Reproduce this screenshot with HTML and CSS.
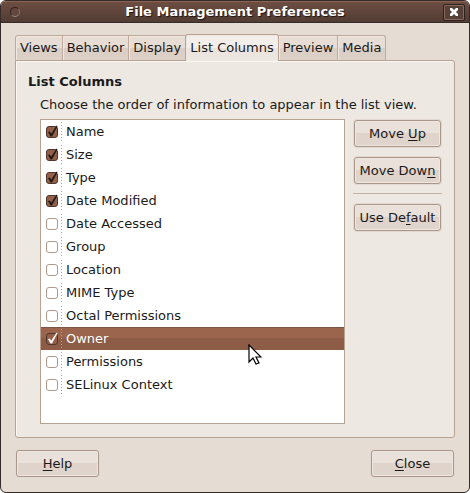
FILE: index.html
```html
<!DOCTYPE html>
<html lang="en">
<head>
<meta charset="utf-8">
<title>File Management Preferences</title>
<link rel="stylesheet" href="styles.css">
</head>
<body>
<main class="window">
  <header class="titlebar">
    <button class="window-menu" aria-label="Window menu"></button>
    <h1 class="title">File Management Preferences</h1>
    <button class="window-close" aria-label="Close window">
      <svg width="10" height="10" viewBox="0 0 10 10"><path d="M1 1h2l2 2 2-2h2v2L7 5l2 2v2H7L5 7 3 9H1V7l2-2-2-2z" fill="#fff"/></svg>
    </button>
  </header>
  <div class="content">
    <nav class="tabs" role="tablist">
      <button class="tab" role="tab">Views</button>
      <button class="tab" role="tab">Behavior</button>
      <button class="tab" role="tab">Display</button>
      <button class="tab active" role="tab" aria-selected="true">List Columns</button>
      <button class="tab" role="tab">Preview</button>
      <button class="tab" role="tab">Media</button>
    </nav>
    <section class="panel">
      <h2 class="heading">List Columns</h2>
      <div class="group">
        <p class="hint">Choose the order of information to appear in the list view.</p>
        <div class="chooser">
          <ul class="list">
            <li><label class="row"><input type="checkbox" checked><span class="name">Name</span></label></li>
            <li><label class="row"><input type="checkbox" checked><span class="name">Size</span></label></li>
            <li><label class="row"><input type="checkbox" checked><span class="name">Type</span></label></li>
            <li><label class="row"><input type="checkbox" checked><span class="name">Date Modified</span></label></li>
            <li><label class="row"><input type="checkbox"><span class="name">Date Accessed</span></label></li>
            <li><label class="row"><input type="checkbox"><span class="name">Group</span></label></li>
            <li><label class="row"><input type="checkbox"><span class="name">Location</span></label></li>
            <li><label class="row"><input type="checkbox"><span class="name">MIME Type</span></label></li>
            <li><label class="row"><input type="checkbox"><span class="name">Octal Permissions</span></label></li>
            <li class="selected"><label class="row"><input type="checkbox" checked><span class="name">Owner</span></label>
              <svg class="pointer" width="14" height="21" viewBox="0 0 14 21"><path d="M1 1v17l4-4 3 6 3-1-3-6h5z" fill="#fff" stroke="#000" stroke-width="1.2"/></svg>
            </li>
            <li><label class="row"><input type="checkbox"><span class="name">Permissions</span></label></li>
            <li><label class="row"><input type="checkbox"><span class="name">SELinux Context</span></label></li>
          </ul>
          <div class="actions">
            <button class="button">Move <u>U</u>p</button>
            <button class="button">Move Dow<u>n</u></button>
            <hr class="separator">
            <button class="button">Use De<u>f</u>ault</button>
          </div>
        </div>
      </div>
    </section>
    <footer class="footer">
      <button class="button"><u>H</u>elp</button>
      <button class="button"><u>C</u>lose</button>
    </footer>
  </div>
</main>
</body>
</html>
```
FILE: styles.css
```css
* {
  box-sizing: border-box;
}

body {
  margin: 0;
  background: #fff;
  color: #1a1a1a;
  font: 13px/20px "DejaVu Sans", sans-serif;
}

button {
  margin: 0;
  padding: 0;
  font: inherit;
  color: inherit;
}

h1, h2, p, ul {
  margin: 0;
  padding: 0;
}

.window {
  display: flex;
  flex-direction: column;
  min-height: 100vh;
  border: 1px solid #352b28;
  border-radius: 6px;
  background: #e5dcd3;
  overflow: hidden;
}

.titlebar {
  display: flex;
  align-items: center;
  height: 22px;
  padding: 0 4px 0 9px;
  border-top: 1px solid #8b6354;
  border-bottom: 1px solid #352b28;
  background: linear-gradient(#6d4d42, #513c34);
}

.window-menu {
  width: 10px;
  height: 10px;
  border: 1px solid #32231e;
  border-bottom-color: #a08a80;
  border-right-color: #8a7268;
  border-radius: 50%;
  background: #62483e;
}

.title {
  flex: 1;
  padding-left: 7px;
  color: #fff;
  font-size: 13px;
  line-height: 20px;
  text-align: center;
  text-shadow: 1px 1px 1px #1c1411;
}

.window-close {
  display: flex;
  align-items: center;
  justify-content: center;
  width: 22px;
  height: 17px;
  border: 1px solid #2e211d;
  border-radius: 2px;
  background: #574038;
  box-shadow: inset 0 0 0 1px #86695e;
}

.content {
  display: flex;
  flex: 1;
  flex-direction: column;
  padding: 11px 14px 15px;
}

.tabs {
  display: flex;
  align-items: flex-end;
}

.tab {
  height: 25px;
  padding: 0 4px;
  border: solid #c0aa9b;
  border-width: 1px 1px 0 0;
  background: linear-gradient(#e7ddd5 50%, #dacdc3 50%, #ddd1c8);
  box-shadow: inset 1px 1px #efe7e1;
  white-space: nowrap;
}

.tab:first-child {
  border-left-width: 1px;
  border-top-left-radius: 3px;
}

.tab:last-child {
  border-top-right-radius: 3px;
}

.tab.active {
  z-index: 1;
  height: 27px;
  margin: 0 0 -1px -1px;
  border-color: #b7a292;
  border-left-width: 1px;
  border-radius: 3px 3px 0 0;
  background: linear-gradient(#f4eeea 50%, #ebe2dc 50%, #ede8e2);
}

.panel {
  display: flex;
  flex: 1;
  flex-direction: column;
  padding: 11px 12px 13px;
  border: 1px solid #b7a292;
  border-radius: 0 3px 3px 3px;
  background: #ede8e2;
  box-shadow: inset 1px 1px #faf7f4;
}

.heading {
  font-size: 13px;
  line-height: 20px;
}

.group {
  display: flex;
  flex: 1;
  flex-direction: column;
  gap: 4px;
  padding: 3px 0 0 12px;
}

.chooser {
  display: flex;
  flex: 1;
  gap: 8px;
}

.list {
  flex: 1;
  border: 1px solid #b7a292;
  background: #fff;
  list-style: none;
}

.list li {
  position: relative;
}

.row {
  display: flex;
  align-items: center;
  height: 23px;
  padding-left: 5px;
}

.row input {
  appearance: none;
  width: 12px;
  height: 12px;
  margin: 1px 3px 0 0;
  border: 1px solid #b0998a;
  border-radius: 3px;
  background: #fff;
}

.row input:checked {
  border-color: #50372e;
  background: #935f49;
}

.row input:checked::before {
  content: "";
  display: block;
  width: 12px;
  height: 12px;
  margin: -2px 0 0 -1px;
  background: #1f1a18;
  clip-path: polygon(17% 58%, 32% 54%, 43% 72%, 88% 4%, 96% 10%, 50% 96%, 38% 96%);
}

.selected .row input:checked::before {
  background: #fff;
}

.name {
  height: 23px;
  padding-left: 5px;
  background: repeating-linear-gradient(transparent 0 2px, #aaa4a0 2px 3px) left / 1px no-repeat;
  line-height: 23px;
}

.selected {
  background: linear-gradient(#7c5748 1px, #9b644c 1px 11px, #8d5c47 11px);
  color: #fff;
}

.pointer {
  position: absolute;
  z-index: 1;
  top: 17px;
  left: 207px;
}

.actions {
  display: flex;
  flex-direction: column;
  gap: 10px;
  width: 89px;
  padding-top: 1px;
}

.button {
  height: 27px;
  padding: 0 4px;
  border: 1px solid #ab9789;
  border-radius: 3px;
  background: linear-gradient(#e9e0d9, #e9e1db 50%, #dfd3ca 50%, #e0d5cd);
  box-shadow: inset 0 0 0 1px #eee7e1, 0 0 0 1px #e3d9d1;
  white-space: nowrap;
}

.actions .button {
  margin: 0 1px;
}

.button u {
  text-underline-offset: 2px;
}

.separator {
  align-self: stretch;
  height: 1px;
  margin: -1px 0 0;
  border: 0;
  background: #c3b3a6;
}

.footer {
  display: flex;
  justify-content: space-between;
  padding: 12px 1px 0;
}

.footer .button {
  width: 83px;
}
```
